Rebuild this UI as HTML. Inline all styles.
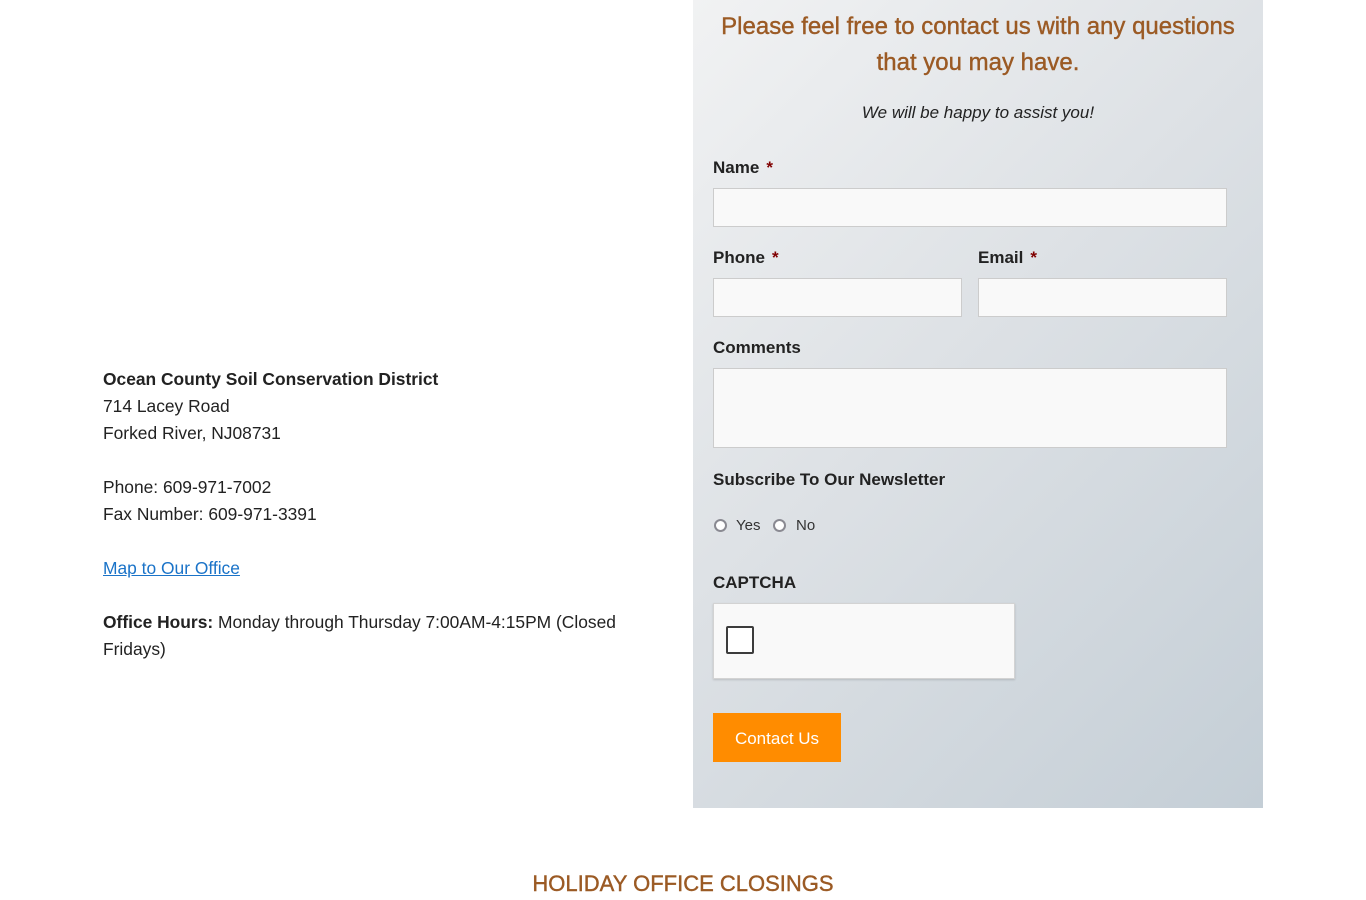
<!DOCTYPE html>
<html><head><meta charset="utf-8"><style>
*{margin:0;padding:0;box-sizing:border-box}
body{width:1366px;height:900px;background:#fff;font-family:"Liberation Sans",sans-serif;color:#222;position:relative;overflow:hidden}
.a{position:absolute;white-space:nowrap}
.left{font-size:17.4px;line-height:27px;color:#222}
.panel{position:absolute;left:693px;top:0;width:570px;height:808px;background:linear-gradient(135deg,#f1f2f3 0%,#dde1e5 45%,#c4ced6 100%)}
.lbl{position:absolute;font-weight:bold;font-size:17px;color:#222}
.lbl span{color:#800000;margin-left:7px}
.inp{position:absolute;background:#f9f9f9;border:1px solid #ccc}
.radio{position:absolute;width:13px;height:13px;border:2px solid #8a8a92;border-radius:50%;background:#fff}
</style></head><body>
<div class="a left" style="left:103px;top:366px"><b>Ocean County Soil Conservation District</b><br>714 Lacey Road<br>Forked River, NJ08731<br><br>Phone: 609-971-7002<br>Fax Number: 609-971-3391<br><br><a style="color:#1a73c8;text-decoration:underline">Map to Our Office</a><br><br><b>Office Hours:</b> Monday through Thursday 7:00AM-4:15PM (Closed<br>Fridays)</div>
<div class="panel">
<div class="a" style="left:0;width:570px;top:9px;text-align:center;font-size:24px;line-height:36px;color:#9b5a24;-webkit-text-stroke:0.4px #9b5a24">Please feel free to contact us with any questions<br>that you may have.</div>
<div class="a" style="left:0;width:570px;top:103px;text-align:center;font-size:17px;font-style:italic;color:#222">We will be happy to assist you!</div>
<div class="lbl" style="left:20px;top:158px">Name<span>*</span></div>
<div class="inp" style="left:20px;top:188px;width:514px;height:39px"></div>
<div class="lbl" style="left:20px;top:248px">Phone<span>*</span></div>
<div class="lbl" style="left:285px;top:248px">Email<span>*</span></div>
<div class="inp" style="left:20px;top:278px;width:249px;height:39px"></div>
<div class="inp" style="left:285px;top:278px;width:249px;height:39px"></div>
<div class="lbl" style="left:20px;top:338px">Comments</div>
<div class="inp" style="left:20px;top:368px;width:514px;height:80px"></div>
<div class="lbl" style="left:20px;top:470px">Subscribe To Our Newsletter</div>
<div class="radio" style="left:21px;top:519px"></div>
<div class="a" style="left:43px;top:517px;font-size:15px;color:#333">Yes</div>
<div class="radio" style="left:80px;top:519px"></div>
<div class="a" style="left:103px;top:517px;font-size:15px;color:#333">No</div>
<div class="lbl" style="left:20px;top:573px">CAPTCHA</div>
<div class="a" style="left:20px;top:603px;width:302px;height:76px;background:#f9f9f9;border:1px solid #d3d3d3;box-shadow:0 1px 2px rgba(0,0,0,.15)"></div>
<div class="a" style="left:33px;top:626px;width:28px;height:28px;border:2px solid #3c3c3c;border-radius:2px;background:#fff"></div>
<div class="a" style="left:20px;top:713px;width:128px;height:49px;background:#ff8c00;color:#fff;font-size:17px;text-align:center;line-height:51px">Contact Us</div>
</div>
<div class="a" style="left:0;width:1366px;top:871px;text-align:center;font-size:22px;color:#9b5a24;-webkit-text-stroke:0.4px #9b5a24">HOLIDAY OFFICE CLOSINGS</div>
</body></html>
